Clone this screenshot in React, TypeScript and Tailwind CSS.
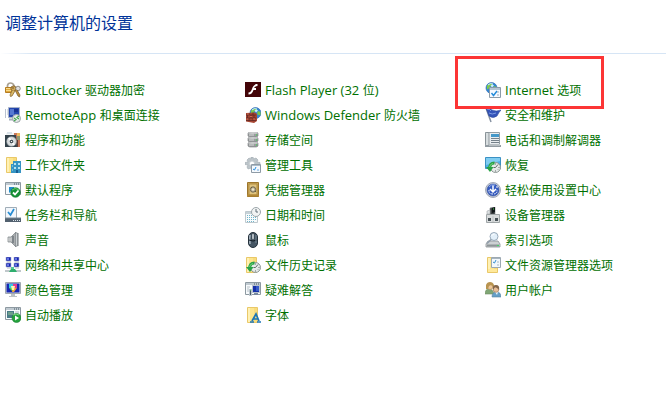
import type { ReactNode } from "react";

type Item = { icon: ReactNode; latin?: string; label: string; tail?: string; marked?: boolean };

const Folder = () => (
  <>
    <path d="M1.5.5h10v15h-10z" fill="#fde68f" stroke="#e9c869" />
    <path d="M2 1h2v14H2z" fill="#fff1b5" />
    <path d="M8 1h3v14H8z" fill="#f9dc7c" />
  </>
);

const WindowFrame = () => (
  <>
    <path d="M.5.5h15v12H.5z" fill="#f7fafc" stroke="#8d99a1" />
    <path d="M1 1h14v2H1z" fill="#c0cad1" />
    <path d="M9 2h1m1 0h1m1 0h1" stroke="#445764" />
  </>
);

const Clock = () => (
  <>
    <circle cx="10.5" cy="10.5" r="5" fill="#e6eae9" stroke="#8c9794" />
    <path d="M10.5 10.5l2.5-3M10.5 10.5H8.500M10.5 6.500v1m0 6v1M14.5 10.500h-1M13.500 13l-.5-.5" stroke="#505e59" strokeWidth=".9" fill="none" />
    <path d="M9.500 6Q4.500 6 4.500 12" stroke="#29a346" strokeWidth="2.800" fill="none" />
    <path d="M1 10h7.500L5 15z" fill="#29a346" />
    <path d="M8 6.500Q5 7 4.500 10" stroke="#82dc83" strokeWidth=".8" fill="none" />
  </>
);

const Globe = () => (
  <>
    <circle cx="6.500" cy="6" r="5.500" fill="#3287d4" stroke="#3971b4" strokeWidth=".7" />
    <path d="M2 3.500L5 1.500l3 .5-1 2-2 .5-1 2-2 1zM9 4l2.500 1v3L9 8 8 6z" fill="#77c84c" />
    <path d="M5.500 3.500l2-1 1.500 1-2 2z" fill="#d2f0ff" />
    <path d="M3 3Q5 .8 8 2" stroke="#d5f1ff" fill="none" />
  </>
);

const icons = {
  bitlocker: (
    <>
      <path d="M2.500 6V3.500Q3 1 5.500 1T9 3.500V6" fill="none" stroke="#aaa293" strokeWidth="1.700" />
      <path d="M.5 5.500h8v5h-8z" fill="#dfa73d" stroke="#b67d20" />
      <path d="M1 6.500h7M1 8.500h7" stroke="#f9db87" />
      <circle cx="8.500" cy="6.500" r="2.600" fill="#d1aa58" stroke="#755321" strokeWidth=".8" />
      <path d="M7 8.500L5 13l.5 1.500 1.500-.5 3-5" fill="#dab865" stroke="#7d5d2b" strokeWidth=".7" />
      <circle cx="13" cy="6.500" r="2.300" fill="#ddd" stroke="#77746b" strokeWidth=".8" />
      <path d="M10 8l3 6 1.500 1 .5-2-3-5" fill="#c0933d" stroke="#745325" strokeWidth=".7" />
      <circle cx="8" cy="6" r=".8" fill="#6b4c24" />
    </>
  ),
  remote: (
    <>
      <path d="M3.500.5h11v10h-11z" fill="#2447af" stroke="#a9b5ca" />
      <path d="M5 2h4v6H5z" fill="#5578d1" />
      <path d="M9 2h4v3H9z" fill="#173292" />
      <path d="M.5 2v9M2 3h1M2 5h1M2 7h1" stroke="#b8c2d0" />
      <path d="M4 12.500h5" stroke="#a5afbc" strokeWidth="2" />
      <circle cx="11.500" cy="11.500" r="4" fill="#e4e8e8" stroke="#9ba5a9" />
      <path d="M9 11l2 1.500L9 14M14 9l-2 1.500 2 1.500" fill="none" stroke="#40a84b" strokeWidth="1.200" />
    </>
  ),
  programs: (
    <>
      <path d="M1 1h9v3H1z" fill="#f2f5f6" />
      <path d="M2 0h5v2H2z" fill="#dae3ea" />
      <path d="M9 1h6v14H9z" fill="#c8795c" />
      <path d="M12 1h3v3h-3z" fill="#edba61" />
      <path d="M12 4h3v4h-3z" fill="#8e9875" />
      <path d="M0 3h11l1 12H0z" fill="#34424b" />
      <circle cx="6.500" cy="9.500" r="4.800" fill="#d9dddf" stroke="#9ba5aa" strokeWidth=".6" />
      <path d="M6.500 9.500L3 6.500l2-1zM6.500 9.500l3.500 3-2 1z" fill="#fff" />
      <circle cx="6.500" cy="9.500" r="1.700" fill="#26343b" />
      <circle cx="6.500" cy="9.500" r=".8" fill="#fff" />
      <path d="M12 8h1v7h-1z" fill="#603d38" />
    </>
  ),
  workFolder: (
    <>
      <Folder />
      <path d="M6 7h2V4h8v12H6z" fill="#3694c3" />
      <path d="M9 6h2v2H9zm4 0h2v2h-2zM9 10h2v2H9zm4 0h2v2h-2z" fill="#b7e2f1" />
      <path d="M7 8h1v2H7zm0 4h1v2H7z" fill="#75bdd9" />
      <path d="M11 13h2v3h-2z" fill="#165e93" />
    </>
  ),
  defaults: (
    <>
      <WindowFrame />
      <path d="M4 5h5v3H7L4 11z" fill="#248bc8" />
      <circle cx="10.500" cy="10.500" r="4.800" fill="#169036" stroke="#077826" strokeWidth=".6" />
      <path d="M7 8Q10 5 14 8" stroke="#65c969" fill="none" />
      <path d="M8 10.500l2 2 3.500-4" fill="none" stroke="#fff" strokeWidth="1.800" />
    </>
  ),
  taskbar: (
    <>
      <path d="M.5.5h11v12H.5z" fill="#f1f6fb" stroke="#a0adb7" />
      <path d="M3 5l2.500 3L9 2" fill="none" stroke="#268bd2" strokeWidth="1.700" />
      <path d="M0 11h16v4H0z" fill="#52616f" />
      <path d="M0 11h16" stroke="#758694" />
      <path d="M8 13.500h1m1 0h1m1 0h1m1 0h1" stroke="#dce5eb" />
    </>
  ),
  sound: (
    <>
      <path d="M3 5h3l5-5v15l-5-5H3z" fill="#a9adaf" stroke="#777e82" strokeWidth=".7" />
      <path d="M10.500 1v13h2V1z" fill="#cbd0d3" stroke="#7c8387" strokeWidth=".6" />
      <path d="M4 5.500v4M6 5.500v4" stroke="#dfe1e1" />
      <path d="M8 4v7" stroke="#70797e" strokeWidth="1.500" />
      <path d="M13 1v13" stroke="#737b7f" />
    </>
  ),
  network: (
    <>
      {[[1, 0], [9, 0], [1, 6], [9, 6]].map(([x, y]) => (
        <g key={`${x}-${y}`}>
          <path d={`M${x} ${y}h5v4h-5z`} fill="#1724ae" stroke="#a8afd4" strokeWidth=".6" />
          <path d={`M${x + 1} ${y + 1}h2v2h-2z`} fill="#6576e4" />
          <path d={`M${x + 1} ${y + 5}h4`} stroke="#b3bbc1" />
        </g>
      ))}
      <path d="M0 14h16" stroke="#c0c8cb" strokeWidth="2" />
      <path d="M7.5 10v3" stroke="#54c895" strokeWidth="3" />
      <path d="M4 15l2-3h4l2 3z" fill="#2eae6d" />
    </>
  ),
  color: (
    <>
      <path d="M.5.5h15v11H.5z" fill="#d3d9df" stroke="#a0a8b0" />
      <path d="M1.500 1.500h13v9h-13z" fill="#1828b2" />
      <path d="M4 2h4v4H4z" fill="#38cbdf" />
      <path d="M8 2h4v4H8z" fill="#e43b90" />
      <path d="M4 6h4v4z" fill="#54cf47" />
      <path d="M8 6h4l-3 4H7z" fill="#f3a235" />
      <path d="M6 4h4l-1 4H7z" fill="#fff6b0" />
      <path d="M6 12h4v2h2v1H4v-1h2z" fill="#bbc1c5" />
    </>
  ),
  autoplay: (
    <>
      <WindowFrame />
      <path d="M2 4h7v7H2z" fill="#487b86" />
      <path d="M3 5h5v3H3z" fill="#6e9e8c" />
      <path d="M10 5h4M10 7h4" stroke="#adbac1" />
      <circle cx="11.500" cy="11" r="4.500" fill="#25a33c" stroke="#1b7f35" strokeWidth=".6" />
      <path d="M8 8q3-2 6 0" stroke="#7cd581" fill="none" />
      <path d="M10 8.500l4 2.500-4 2.500z" fill="#fff" />
    </>
  ),
  flash: (
    <>
      <path d="M0 0h16v15H0z" fill="#430508" />
      <path d="M12.500 2v2c-2 0-3 1-3.300 2H11v2H8.500c-1 3-2.500 4.500-5 4.500v-2C5.500 10.500 6 9 7 7c1-3 2.500-5 5.500-5z" fill="#fff" />
    </>
  ),
  defender: (
    <>
      <g transform="translate(4 0)"><Globe /></g>
      <path d="M1 6l9-.5 2 1.500v7L9 16l-8-1.500z" fill="#a64532" />
      <path d="M1 8h10M1 11h10M1 13.500h10M4 6v2M8 5.500v3M2.500 8v3M6 8v3M9 8v3M4 11v3M8 11v3" stroke="#632924" strokeWidth=".8" />
      <path d="M2 7h2M5 9.500h2M1.500 12h2M8 12h2" stroke="#dc775b" strokeWidth=".8" />
    </>
  ),
  storage: (
    <>
      {[1, 6, 11].map((y) => (
        <g key={y}>
          <path d={`M3 ${y}h10v3q-1 1-2 1H5q-1 0-2-1z`} fill="#9a9d9e" stroke="#777b7c" strokeWidth=".6" />
          <ellipse cx="8" cy={y} rx="5" ry="1" fill="#dfe1e1" stroke="#9b9e9f" strokeWidth=".6" />
          <path d={`M4 ${y + 2}h5`} stroke="#d8dada" />
          <path d={`M11 ${y + 2}h1`} stroke="#53cf62" strokeWidth="1.500" />
        </g>
      ))}
    </>
  ),
  tools: (
    <>
      <path d="M6 0h2l.5 2L11 1l2 2-1 2 3 .5v2h-3l1 2-2 2-2-1-.5 3h-2L6 11l-3 1-1-2 1-2-3-.5v-2l3-.5-1-2 2-2 2 1z" fill="#bdc5ca" stroke="#a0aab0" strokeWidth=".6" />
      <circle cx="7" cy="6.500" r="2.500" fill="#fff" stroke="#c6ced2" />
      <path d="M6.500 7.500h9v8h-9z" fill="#f4f9fe" stroke="#8e9ba6" />
      <path d="M7 8.500h8" stroke="#adbcc8" />
      <path d="M8 12l1.500 1L11 10" fill="none" stroke="#268dde" />
      <path d="M12 13h2" stroke="#6da7dc" />
    </>
  ),
  credential: (
    <>
      <path d="M2.500.5h11v14h-11z" fill="#c9a44e" stroke="#9c752c" />
      <path d="M4 2h8v11H4z" fill="#e0c47e" stroke="#ae8b44" />
      <circle cx="8" cy="7.500" r="2.700" fill="#b5a98b" stroke="#746b53" />
      <circle cx="8" cy="7.500" r="1.200" fill="#eee6ce" />
      <path d="M6 5l1 1m3 3l1 1" stroke="#655a3d" />
      <path d="M2 13.500h12" stroke="#b18734" strokeWidth="2" />
    </>
  ),
  date: (
    <>
      <path d="M.5 4.500h12v11H.5z" fill="#f8fbfc" stroke="#bfc9ce" />
      <path d="M1 5h11v2H1z" fill="#c6d2d8" />
      <path d="M2 8.500h9M2 10.500h9M2 12.500h9M2 14.500h8" stroke="#72b5cb" strokeDasharray="1 1" />
      <circle cx="11" cy="5" r="4.500" fill="#f1f3f3" stroke="#9ca6aa" />
      <path d="M11 2v3h2" fill="none" stroke="#5e6d76" />
    </>
  ),
  mouse: (
    <>
      <rect x="3.500" y=".5" width="9" height="15" rx="4.500" fill="#455563" stroke="#23303a" />
      <path d="M5 3q-.500 3 0 9" fill="none" stroke="#afbdc8" strokeWidth="1.400" />
      <path d="M8 1v6M4 8q4 2 8 0" fill="none" stroke="#111b23" />
      <rect x="7" y="1.500" width="2" height="6" rx="1" fill="#e5edf2" stroke="#26333f" strokeWidth=".5" />
      <path d="M11 3v8" stroke="#748693" />
    </>
  ),
  history: <><Folder /><Clock /></>,
  troubleshoot: (
    <>
      <WindowFrame />
      <path d="M2 5h3M2 7h2M2 9h2" stroke="#b6c0c7" />
      <path d="M7.500 3.500h7v7h-7z" fill="#1530a9" stroke="#b6c0cc" />
      <path d="M11 4h3v5h-3z" fill="#365bc8" />
      <path d="M9 11h4v2H9z" fill="#7889a0" />
      <path d="M4.500 7.500h2v6h-2z" fill="#495b6b" stroke="#bcc7ce" />
      <path d="M5 8h1" stroke="#5ae86c" />
    </>
  ),
  fonts: (
    <>
      <g transform="translate(1 0)"><Folder /></g>
      <path d="M7 14L11 7l3 7M8.500 12h4" stroke="#1b76b8" strokeWidth="1.700" fill="none" />
      <path d="M5 15h4m3 0h4" stroke="#1b76b8" strokeWidth="1.400" />
    </>
  ),
  internet: (
    <>
      <Globe />
      <path d="M4.500 5.500h11v10h-11z" fill="#f6faff" stroke="#8c9ba8" />
      <path d="M5 6h10v2H5z" fill="#b6c6d4" />
      <path d="M6.500 11l2 2.500L12 9" fill="none" stroke="#238bda" strokeWidth="1.400" />
      <path d="M12 13h2M12 10h2" stroke="#9daebb" />
    </>
  ),
  security: (
    <>
      <path d="M1 1l5 14" stroke="#8692a2" strokeWidth="1.500" />
      <path d="M1 1q3-1 6 2 4 2 9 0-2 2-4 6-4 3-8 0z" fill="#3454b8" stroke="#2e4a9b" strokeWidth=".6" />
      <path d="M2 2q3 0 4 2M4 6q3 2 7 0" stroke="#7d9be2" fill="none" />
    </>
  ),
  phone: (
    <>
      <path d="M.5.5h14v12H.5z" fill="#e9edef" stroke="#939da3" />
      <rect x=".5" y=".5" width="3.500" height="13" rx="1" fill="#d7dddf" stroke="#7c858b" strokeWidth=".8" />
      <path d="M6 2h8v3H6z" fill="#4498c9" />
      <path d="M6 6.500h8M6 8.500h8M6 10.500h8" stroke="#75818a" />
      <path d="M0 14h16" stroke="#929ba1" strokeWidth="2" />
      <path d="M4 13h11" stroke="#dce1e3" />
    </>
  ),
  recovery: (
    <>
      <path d="M.5.500h15v11H.5z" fill="#4caee6" stroke="#3b91c4" />
      <path d="M1 1h14v3L1 8z" fill="#80cdf1" />
      <Clock />
    </>
  ),
  access: (
    <>
      <circle cx="8" cy="8" r="7.500" fill="#cfd4e0" stroke="#9199a9" strokeWidth=".8" />
      <circle cx="8" cy="8" r="6" fill="#345bc1" stroke="#3b5698" strokeWidth=".6" />
      <path d="M4 5Q6 2 10 3" fill="none" stroke="#8cabed" />
      <path d="M8 3.500V9m-3-2l3 3 3-3" fill="none" stroke="#fff" strokeWidth="1.500" />
      <path d="M4 8v1q0 3 4 3t4-3V8" fill="none" stroke="#fff" strokeDasharray="1.500 1" />
      <path d="M11 5h2" stroke="#fff" />
    </>
  ),
  device: (
    <>
      <path d="M5 1l5-1v9H5z" fill="#3d4143" stroke="#7b8184" strokeWidth=".6" />
      <path d="M7 1l3-1v5L7 6z" fill="#111719" />
      <path d="M8 2h1" stroke="#4ae252" />
      <path d="M2 4l3-1v4H2z" fill="#dce0e2" stroke="#a4a9ac" strokeWidth=".6" />
      <path d="M1.500 7.500h13v8h-13z" fill="#d9dcdd" stroke="#9fa5a7" />
      <path d="M3 11h3v3H3zm7 0h3v3h-3z" fill="#485257" />
      <path d="M8 9v6" stroke="#bdc2c4" />
    </>
  ),
  indexing: (
    <>
      <path d="M3 9h10l2 3v3H1v-3z" fill="#cdd1d3" stroke="#8a9195" strokeWidth=".8" />
      <path d="M2 12.500h12v2H2z" fill="#8d9497" />
      <path d="M12 13.500h2" stroke="#42d963" />
      <circle cx="9" cy="4.500" r="4" fill="#e2eff9" stroke="#98a9b9" />
      <path d="M6.500 4q1-2 3-2" stroke="#fff" fill="none" />
      <path d="M6 7.500l-4 4" stroke="#919daa" strokeWidth="1.600" />
    </>
  ),
  explorer: (
    <>
      <g transform="translate(1 0)"><Folder /></g>
      <path d="M6.500.5h9v10h-9z" fill="#f2f8fd" stroke="#9ca9b2" />
      <path d="M7 1.500h8" stroke="#a8b5bf" />
      <path d="M8 5l1.500 1L11 3" fill="none" stroke="#348fce" />
      <path d="M12 5h2M12 8h2" stroke="#a8b7c1" />
      <path d="M3 12h9v3H3z" fill="#ffe99b" />
    </>
  ),
  users: (
    <>
      <path d="M0 12q0-5 4-5t5 5z" fill="#7fa675" stroke="#718f61" strokeWidth=".6" />
      <circle cx="5" cy="4.500" r="3" fill="#edc69a" stroke="#b28e5f" strokeWidth=".7" />
      <path d="M1 7V3q1-3 4-3t4 3v3L6 3 4 4 3 7z" fill="#b99450" />
      <path d="M7 15q0-5 4.500-5t4.500 5z" fill="#669fc6" stroke="#5b86a2" strokeWidth=".6" />
      <path d="M10 10l2 3 1-3z" fill="#edf6fb" />
      <circle cx="11" cy="7.500" r="2.800" fill="#e8bd96" stroke="#93714f" strokeWidth=".6" />
      <path d="M8 8q-1-5 3-5t3 5l-2-2-2-1z" fill="#83664a" />
    </>
  ),
};

const columns: Item[][] = [
  [
    { icon: icons.bitlocker, latin: "BitLocker ", label: "驱动器加密" },
    { icon: icons.remote, latin: "RemoteApp ", label: "和桌面连接" },
    { icon: icons.programs, label: "程序和功能" },
    { icon: icons.workFolder, label: "工作文件夹" },
    { icon: icons.defaults, label: "默认程序" },
    { icon: icons.taskbar, label: "任务栏和导航" },
    { icon: icons.sound, label: "声音" },
    { icon: icons.network, label: "网络和共享中心" },
    { icon: icons.color, label: "颜色管理" },
    { icon: icons.autoplay, label: "自动播放" },
  ],
  [
    { icon: icons.flash, latin: "Flash Player (32 ", label: "位", tail: ")" },
    { icon: icons.defender, latin: "Windows Defender ", label: "防火墙" },
    { icon: icons.storage, label: "存储空间" },
    { icon: icons.tools, label: "管理工具" },
    { icon: icons.credential, label: "凭据管理器" },
    { icon: icons.date, label: "日期和时间" },
    { icon: icons.mouse, label: "鼠标" },
    { icon: icons.history, label: "文件历史记录" },
    { icon: icons.troubleshoot, label: "疑难解答" },
    { icon: icons.fonts, label: "字体" },
  ],
  [
    { icon: icons.internet, latin: "Internet ", label: "选项", marked: true },
    { icon: icons.security, label: "安全和维护" },
    { icon: icons.phone, label: "电话和调制解调器" },
    { icon: icons.recovery, label: "恢复" },
    { icon: icons.access, label: "轻松使用设置中心" },
    { icon: icons.device, label: "设备管理器" },
    { icon: icons.indexing, label: "索引选项" },
    { icon: icons.explorer, label: "文件资源管理器选项" },
    { icon: icons.users, label: "用户帐户" },
  ],
];

function ControlLink({ item }: { item: Item }) {
  return (
    <li className="relative flex h-[25px] items-start pt-1">
      <a href="#" className="flex h-4 items-center gap-1 whitespace-pre text-[#007000]">
        <svg className="size-4 shrink-0" viewBox="0 0 16 16" aria-hidden="true">{item.icon}</svg>
        <span className="leading-4">
          {item.latin && <span className="font-['Open_Sans',sans-serif] text-[13px] leading-4">{item.latin}</span>}
          {item.label}
          {item.tail && <span className="font-['Open_Sans',sans-serif] text-[13px] leading-4">{item.tail}</span>}
        </span>
      </a>
      {item.marked && (
        <span className="pointer-events-none absolute -top-[22px] -left-[30px] z-10 h-[53px] w-[149px] border-3 border-[#fc3535]" />
      )}
    </li>
  );
}

export default function App() {
  return (
    <main className="min-h-screen bg-white font-['Noto_Sans_CJK_SC',sans-serif] text-xs">
      <header>
        <h1 className="px-[5px] pt-2.5 pb-[19px] text-base leading-6 text-[#003399]">调整计算机的设置</h1>
        <div className="h-px bg-linear-to-r from-white via-[#d6e5f5] via-5% to-[#d6e5f5]" />
      </header>
      <nav className="grid grid-cols-[240px_240px_1fr] pt-6 pl-[5px]" aria-label="调整计算机的设置">
        {columns.map((items, index) => (
          <ul key={index}>
            {items.map((item) => <ControlLink key={item.label} item={item} />)}
          </ul>
        ))}
      </nav>
    </main>
  );
}
